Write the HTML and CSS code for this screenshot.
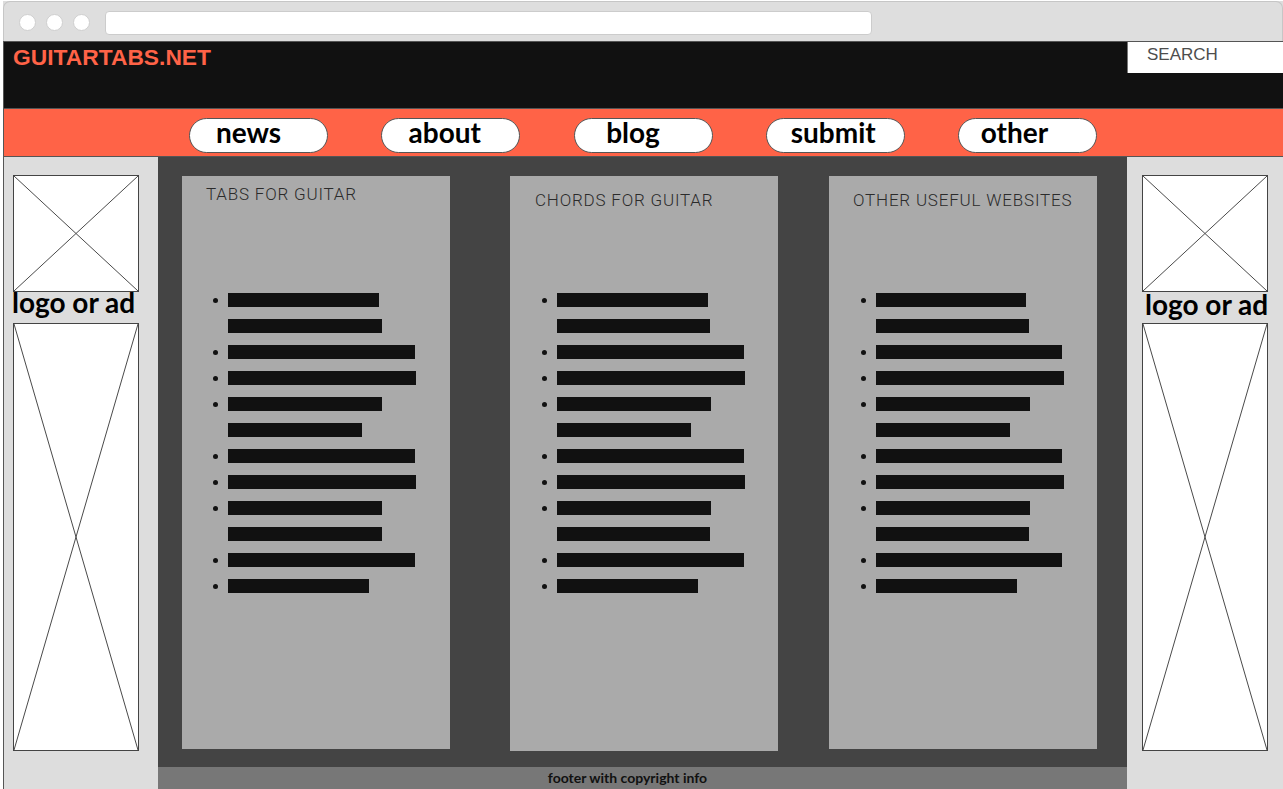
FILE: index.html
```html
<!DOCTYPE html>
<html lang="en">
<head>
<meta charset="utf-8">
<title>GUITARTABS.NET wireframe</title>
<link rel="stylesheet" href="styles.css">
</head>
<body>
<div class="window">
  <div class="chrome">
    <div class="dots">
      <span class="dot"></span>
      <span class="dot"></span>
      <span class="dot"></span>
    </div>
    <div class="address"></div>
  </div>
  <div class="page">
    <header class="site-header">
      <div class="logo">GUITARTABS.NET</div>
      <div class="search">SEARCH</div>
    </header>
    <nav class="nav">
      <a class="nav-btn">news</a>
      <a class="nav-btn nav-btn--about">about</a>
      <a class="nav-btn nav-btn--blog">blog</a>
      <a class="nav-btn nav-btn--submit">submit</a>
      <a class="nav-btn nav-btn--other">other</a>
    </nav>
    <div class="body">
      <aside class="side side--left">
        <div class="ph ph--small"><svg viewBox="0 0 100 100" preserveAspectRatio="none"><line x1="0" y1="0" x2="100" y2="100" vector-effect="non-scaling-stroke"/><line x1="100" y1="0" x2="0" y2="100" vector-effect="non-scaling-stroke"/></svg></div>
        <div class="side-label">logo or ad</div>
        <div class="ph ph--tall"><svg viewBox="0 0 100 100" preserveAspectRatio="none"><line x1="0" y1="0" x2="100" y2="100" vector-effect="non-scaling-stroke"/><line x1="100" y1="0" x2="0" y2="100" vector-effect="non-scaling-stroke"/></svg></div>
      </aside>
      <main class="main">
        <div class="cols">
          <section class="col col--first">
            <h2 class="col-head col-head--tight">TABS FOR GUITAR</h2>
            <ul class="list">
              <li><span class="bar" style="width:151px"></span><span class="bar" style="width:154px"></span></li>
              <li><span class="bar" style="width:187px"></span></li>
              <li><span class="bar" style="width:188px"></span></li>
              <li><span class="bar" style="width:154px"></span><span class="bar" style="width:134px"></span></li>
              <li><span class="bar" style="width:187px"></span></li>
              <li><span class="bar" style="width:188px"></span></li>
              <li><span class="bar" style="width:154px"></span><span class="bar" style="width:154px"></span></li>
              <li><span class="bar" style="width:187px"></span></li>
              <li><span class="bar" style="width:141px"></span></li>
            </ul>
          </section>
          <section class="col col--second">
            <h2 class="col-head">CHORDS FOR GUITAR</h2>
            <ul class="list list--shift">
              <li><span class="bar" style="width:151px"></span><span class="bar" style="width:153px"></span></li>
              <li><span class="bar" style="width:187px"></span></li>
              <li><span class="bar" style="width:188px"></span></li>
              <li><span class="bar" style="width:154px"></span><span class="bar" style="width:134px"></span></li>
              <li><span class="bar" style="width:187px"></span></li>
              <li><span class="bar" style="width:188px"></span></li>
              <li><span class="bar" style="width:154px"></span><span class="bar" style="width:153px"></span></li>
              <li><span class="bar" style="width:187px"></span></li>
              <li><span class="bar" style="width:141px"></span></li>
            </ul>
          </section>
          <section class="col col--third">
            <h2 class="col-head col-head--third">OTHER USEFUL WEBSITES</h2>
            <ul class="list list--shift">
              <li><span class="bar" style="width:150px"></span><span class="bar" style="width:153px"></span></li>
              <li><span class="bar" style="width:186px"></span></li>
              <li><span class="bar" style="width:188px"></span></li>
              <li><span class="bar" style="width:154px"></span><span class="bar" style="width:134px"></span></li>
              <li><span class="bar" style="width:186px"></span></li>
              <li><span class="bar" style="width:188px"></span></li>
              <li><span class="bar" style="width:154px"></span><span class="bar" style="width:153px"></span></li>
              <li><span class="bar" style="width:186px"></span></li>
              <li><span class="bar" style="width:141px"></span></li>
            </ul>
          </section>
        </div>
        <footer class="footer">footer with copyright info</footer>
      </main>
      <aside class="side side--right">
        <div class="ph ph--small"><svg viewBox="0 0 100 100" preserveAspectRatio="none"><line x1="0" y1="0" x2="100" y2="100" vector-effect="non-scaling-stroke"/><line x1="100" y1="0" x2="0" y2="100" vector-effect="non-scaling-stroke"/></svg></div>
        <div class="side-label side-label--right">logo or ad</div>
        <div class="ph ph--tall"><svg viewBox="0 0 100 100" preserveAspectRatio="none"><line x1="0" y1="0" x2="100" y2="100" vector-effect="non-scaling-stroke"/><line x1="100" y1="0" x2="0" y2="100" vector-effect="non-scaling-stroke"/></svg></div>
      </aside>
    </div>
  </div>
</div>
</body>
</html>
```

FILE: styles.css
```css
html, body {
  margin: 0;
  padding: 0;
  background: #ffffff;
  overflow: hidden;
}

.window {
  margin: 1px 0 0 3px;
  width: 1280px;
  background: #dddddd;
}

/* browser chrome */
.chrome {
  height: 39px;
  border: 1px solid #c6c6c6;
  border-bottom: none;
  border-radius: 7px 7px 0 0;
  display: flex;
  align-items: center;
  padding: 0 0 0 15px;
  background: #dedede;
}

.dots {
  display: flex;
  gap: 10px;
  margin-top: 2px;
}

.dot {
  width: 15px;
  height: 15px;
  border-radius: 50%;
  background: #ffffff;
  border: 1px solid #cfcfcf;
}

.address {
  margin-left: 15px;
  width: 765px;
  height: 22px;
  background: #ffffff;
  border: 1px solid #cccccc;
  border-radius: 4px;
  margin-top: 2px;
}

/* page */
.page {
  border-top: 1px solid #555555;
  border-left: 1px solid #555555;
}

.site-header {
  height: 66px;
  background: #111111;
  display: flex;
  justify-content: space-between;
  align-items: flex-start;
}

.logo {
  font-family: "Liberation Sans", Arial, sans-serif;
  font-weight: bold;
  font-size: 22.8px;
  line-height: 25px;
  color: #ff6347;
  padding: 3px 0 0 9px;
}

.search {
  width: 156px;
  height: 31px;
  box-sizing: border-box;
  background: #ffffff;
  border-left: 1px solid #777777;
  padding: 3px 0 0 19px;
  font-family: "Liberation Sans", Arial, sans-serif;
  font-size: 17px;
  line-height: 20px;
  color: #4d4d4d;
}

.nav {
  height: 49px;
  box-sizing: border-box;
  background: #ff6347;
  border-top: 1px solid #555555;
  border-bottom: 1px solid #555555;
  display: flex;
  gap: 53.25px;
  padding: 9px 0 0 185px;
}

.nav-btn {
  display: block;
  width: 139px;
  height: 35px;
  box-sizing: border-box;
  background: #ffffff;
  border: 1px solid #555555;
  border-radius: 18px;
  font-family: Lato, "Open Sans", sans-serif;
  font-weight: bold;
  font-size: 28px;
  line-height: 26px;
  color: #000000;
  text-align: center;
  padding-right: 20px;
}

.nav-btn--about { padding-right: 12px; }
.nav-btn--blog { padding-right: 20px; }
.nav-btn--submit { padding-right: 4px; }
.nav-btn--other { padding-right: 26px; }

/* body */
.body {
  display: flex;
  align-items: stretch;
}

.side {
  width: 154px;
  background: #dddddd;
  padding: 18px 0 0 9px;
  box-sizing: border-box;
}

.side--right {
  width: 155px;
  padding-left: 15px;
}

.ph {
  width: 126px;
  box-sizing: border-box;
  background: #ffffff;
  border: 1px solid #444444;
}

.ph svg {
  display: block;
  width: 100%;
  height: 100%;
  stroke: #4a4a4a;
  stroke-width: 1;
}

.ph--small { height: 117px; }
.ph--tall { height: 428px; }

.side-label {
  height: 31px;
  box-sizing: border-box;
  font-family: Lato, "Open Sans", sans-serif;
  font-weight: bold;
  font-size: 28px;
  line-height: 20px;
  color: #000000;
  white-space: nowrap;
  margin-left: -1px;
}

.side-label--right {
  padding-top: 2px;
  margin-left: 3px;
}

.main {
  width: 969px;
  background: #444444;
  display: flex;
  flex-direction: column;
}

.cols {
  height: 610px;
  box-sizing: border-box;
  padding-top: 19px;
  display: flex;
  align-items: flex-start;
}

.col {
  width: 268px;
  height: 573px;
  background: #aaaaaa;
}

.col--first { margin-left: 24px; }
.col--second { margin-left: 60px; height: 575px; }
.col--third { margin-left: 51px; }

.col-head {
  margin: 0;
  height: 117px;
  box-sizing: border-box;
  padding: 14px 0 0 25px;
  font-family: Roboto, "Liberation Sans", sans-serif;
  font-weight: 300;
  font-size: 17px;
  line-height: 20px;
  letter-spacing: 0.8px;
  color: #2b2b2b;
}

.col-head--tight { padding-top: 8px; padding-left: 24px; }
.col-head--third { padding-left: 24px; }

.list {
  list-style: none;
  margin: 0;
  padding: 0 0 0 31px;
}

.list--shift { padding-left: 32px; }

.list li {
  display: flex;
  flex-wrap: wrap;
  align-items: flex-start;
  width: 220px;
  margin-bottom: 12px;
}

.list li::before {
  content: "";
  flex: none;
  width: 5px;
  height: 5px;
  border-radius: 50%;
  background: #111111;
  margin: 5px 10px 0 0;
}

.bar {
  display: block;
  height: 14px;
  background: #111111;
}

.bar + .bar {
  margin: 12px 0 0 15px;
}

.footer {
  height: 22px;
  background: #777777;
  font-family: Lato, "Open Sans", sans-serif;
  font-weight: bold;
  font-size: 14px;
  line-height: 22px;
  color: #111111;
  text-align: center;
  padding-right: 30px;
}
```
